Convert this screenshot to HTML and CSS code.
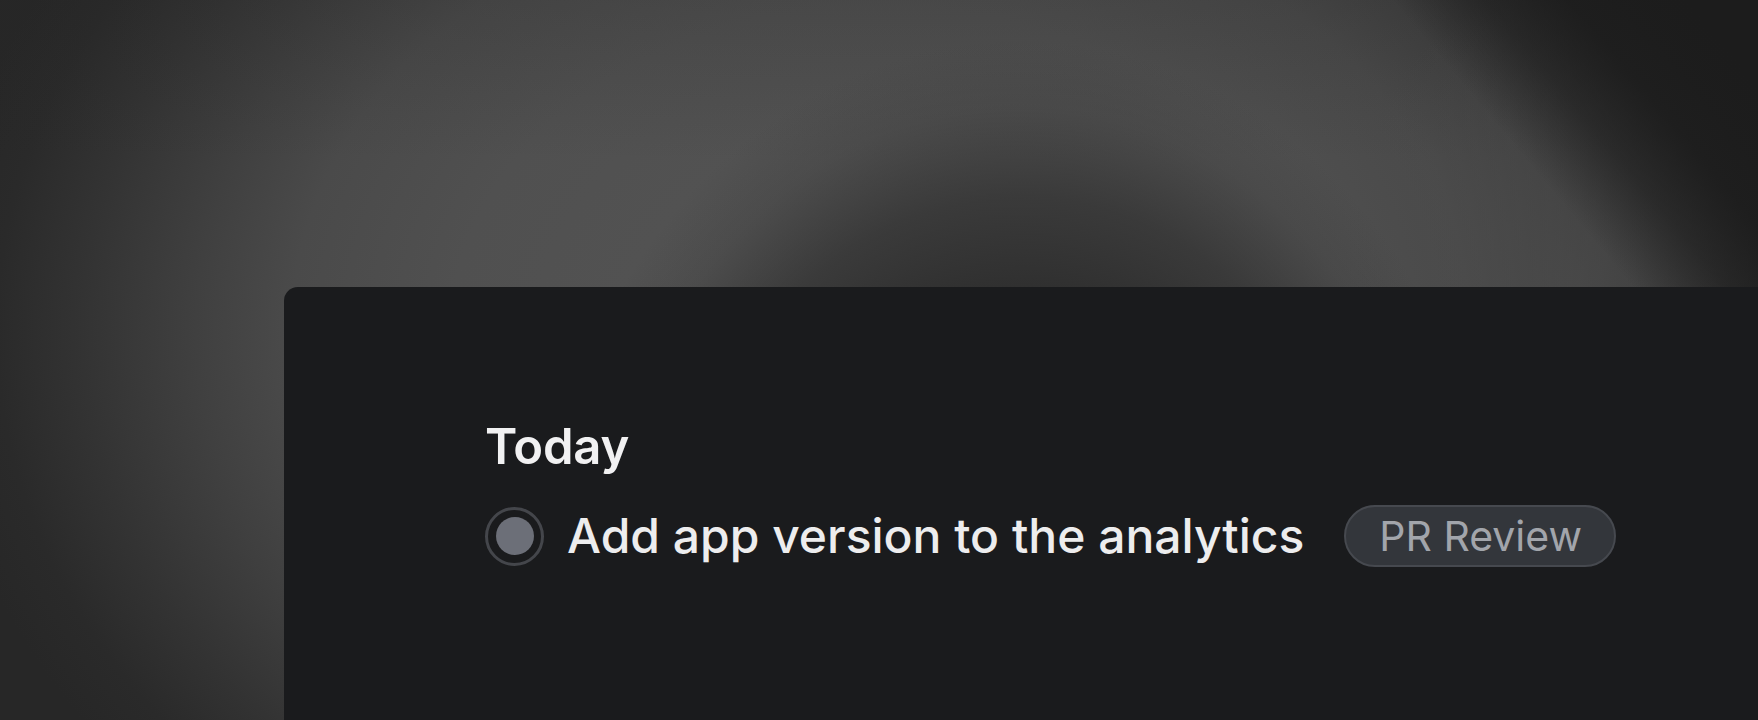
FILE: index.html
```html
<!DOCTYPE html>
<html lang="en">
<head>
<meta charset="utf-8">
<title>Today</title>
<link rel="stylesheet" href="styles.css">
</head>
<body>
  <div class="stage">
    <section class="card">
      <h2 class="day-title">Today</h2>
      <div class="task-row">
        <span class="radio"><span class="radio-dot"></span></span>
        <span class="task-text">Add app version to the analytics</span>
        <span class="pill">PR Review</span>
      </div>
    </section>
  </div>
</body>
</html>
```

FILE: styles.css
```css
html, body {
  margin: 0;
  padding: 0;
}

body {
  width: 1758px;
  height: 720px;
  overflow: hidden;
  font-family: "Inter", "Noto Sans", "Liberation Sans", sans-serif;
  background-color: #272727;
  background-image:
    linear-gradient(50deg, rgba(28,28,28,0) 0%, rgba(28,28,28,0) 84.5%, rgba(28,28,28,0.6) 88.5%, rgba(28,28,28,0.92) 92%, rgba(28,28,28,1) 97%),
    radial-gradient(ellipse 480px 560px at 1020px 600px, rgba(44,44,44,1) 0%, rgba(44,44,44,1) 50%, rgba(50,50,50,0.75) 72%, rgba(60,60,60,0.3) 88%, rgba(64,64,64,0) 100%),
    radial-gradient(ellipse 240px 320px at 1580px 290px, rgba(76,76,76,0.7) 0%, rgba(76,76,76,0.4) 55%, rgba(76,76,76,0) 100%),
    linear-gradient(180deg, rgba(36,36,36,0.18) 0px, rgba(36,36,36,0) 160px),
    radial-gradient(ellipse 950px 720px at 880px 330px, #555555 0%, #505050 45%, #4a4a4a 62%, #404040 72%, #333333 84%, #2a2a2a 93%, rgba(39,39,39,0) 100%);
}

.stage {
  display: flex;
  padding: 287px 0 0 284px;
}

.card {
  flex: none;
  width: 1600px;
  min-height: 460px;
  box-sizing: border-box;
  background: #1a1b1d;
  border-radius: 14px 0 0 0;
  padding: 131px 0 0 201px;
}

.day-title {
  margin: 0;
  font-size: 49px;
  line-height: 58px;
  font-weight: 600;
  color: #f1f1f2;
  letter-spacing: -0.2px;
}

.task-row {
  display: flex;
  align-items: center;
  margin-top: 29px;
}

.radio {
  flex: none;
  width: 59px;
  height: 59px;
  box-sizing: border-box;
  border: 3px solid #44464b;
  border-radius: 50%;
  display: flex;
  align-items: center;
  justify-content: center;
}

.radio-dot {
  width: 38px;
  height: 38px;
  border-radius: 50%;
  background: #6c6f78;
}

.task-text {
  margin-left: 23px;
  font-size: 48px;
  line-height: 58px;
  font-weight: 500;
  color: #ededee;
}

.pill {
  margin-left: 40px;
  height: 62px;
  box-sizing: border-box;
  padding: 0 32px 0 33px;
  border: 2px solid #46494f;
  border-radius: 31px;
  background: #33363b;
  color: #a2a5ab;
  font-size: 41px;
  font-weight: 400;
  display: flex;
  align-items: center;
}
```
